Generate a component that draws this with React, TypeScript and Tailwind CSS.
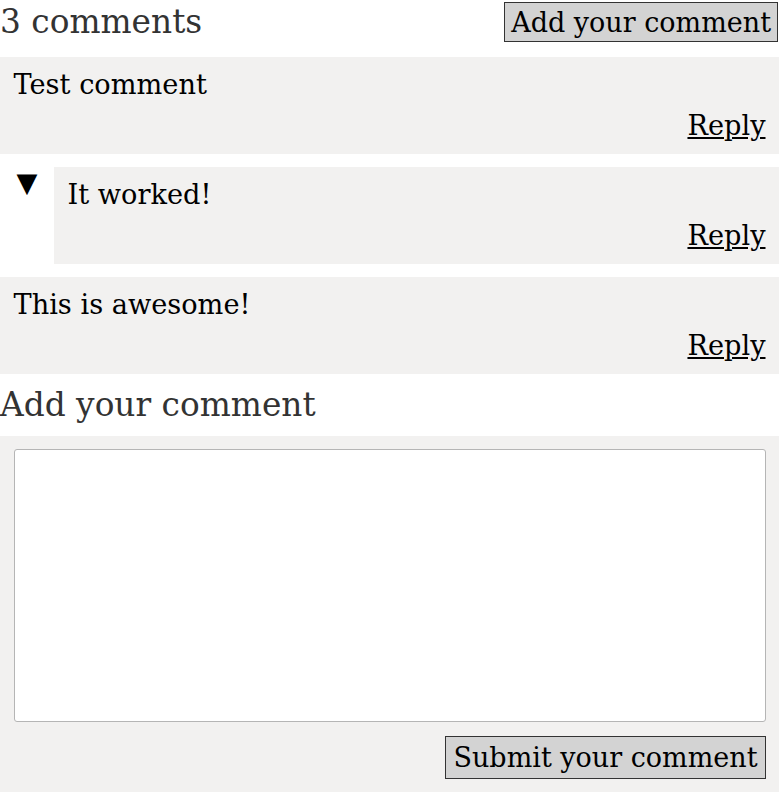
import React from "react";

function Comment({ text }: { text: string }) {
  return (
    <div className="bg-[#f2f1f0] p-[13.5px] flex flex-col gap-[13.5px] leading-[28px] flex-1">
      <p>{text}</p>
      <div className="text-right">
        <a href="#" className="underline text-black">
          Reply
        </a>
      </div>
    </div>
  );
}

export default function App() {
  return (
    <div className="font-['DejaVu_Serif',serif] text-[27.2px] text-black bg-white w-[779px]">
      <div className="flex justify-between items-center h-[44px] mb-[13px]">
        <h2 className="text-[32.8px] text-[#333] leading-[40px]">3 comments</h2>
        <button className="h-[40px] px-[6px] mr-[1px] bg-[#d3d3d3] border border-[#333] leading-none text-black text-[27px]">
          Add your comment
        </button>
      </div>
      <div className="flex flex-col gap-[13.5px]">
        <Comment text="Test comment" />
        <div className="flex">
          <div className="w-[54px] shrink-0 text-center font-['DejaVu_Sans',sans-serif] leading-[30px] pt-[1px]">
            ▼
          </div>
          <Comment text="It worked!" />
        </div>
        <Comment text="This is awesome!" />
      </div>
      <h2 className="text-[32.8px] text-[#333] leading-[62px]">Add your comment</h2>
      <div className="bg-[#f2f1f0] p-[13.5px] flex flex-col gap-[14px]">
        <textarea className="w-full h-[273px] bg-white border border-[#b5b5b5] rounded-[3px] resize-none" />
        <div className="flex justify-end">
          <button className="h-[43px] px-[7px] bg-[#d3d3d3] border border-[#333] leading-none text-black text-[27px]">
            Submit your comment
          </button>
        </div>
      </div>
    </div>
  );
}
